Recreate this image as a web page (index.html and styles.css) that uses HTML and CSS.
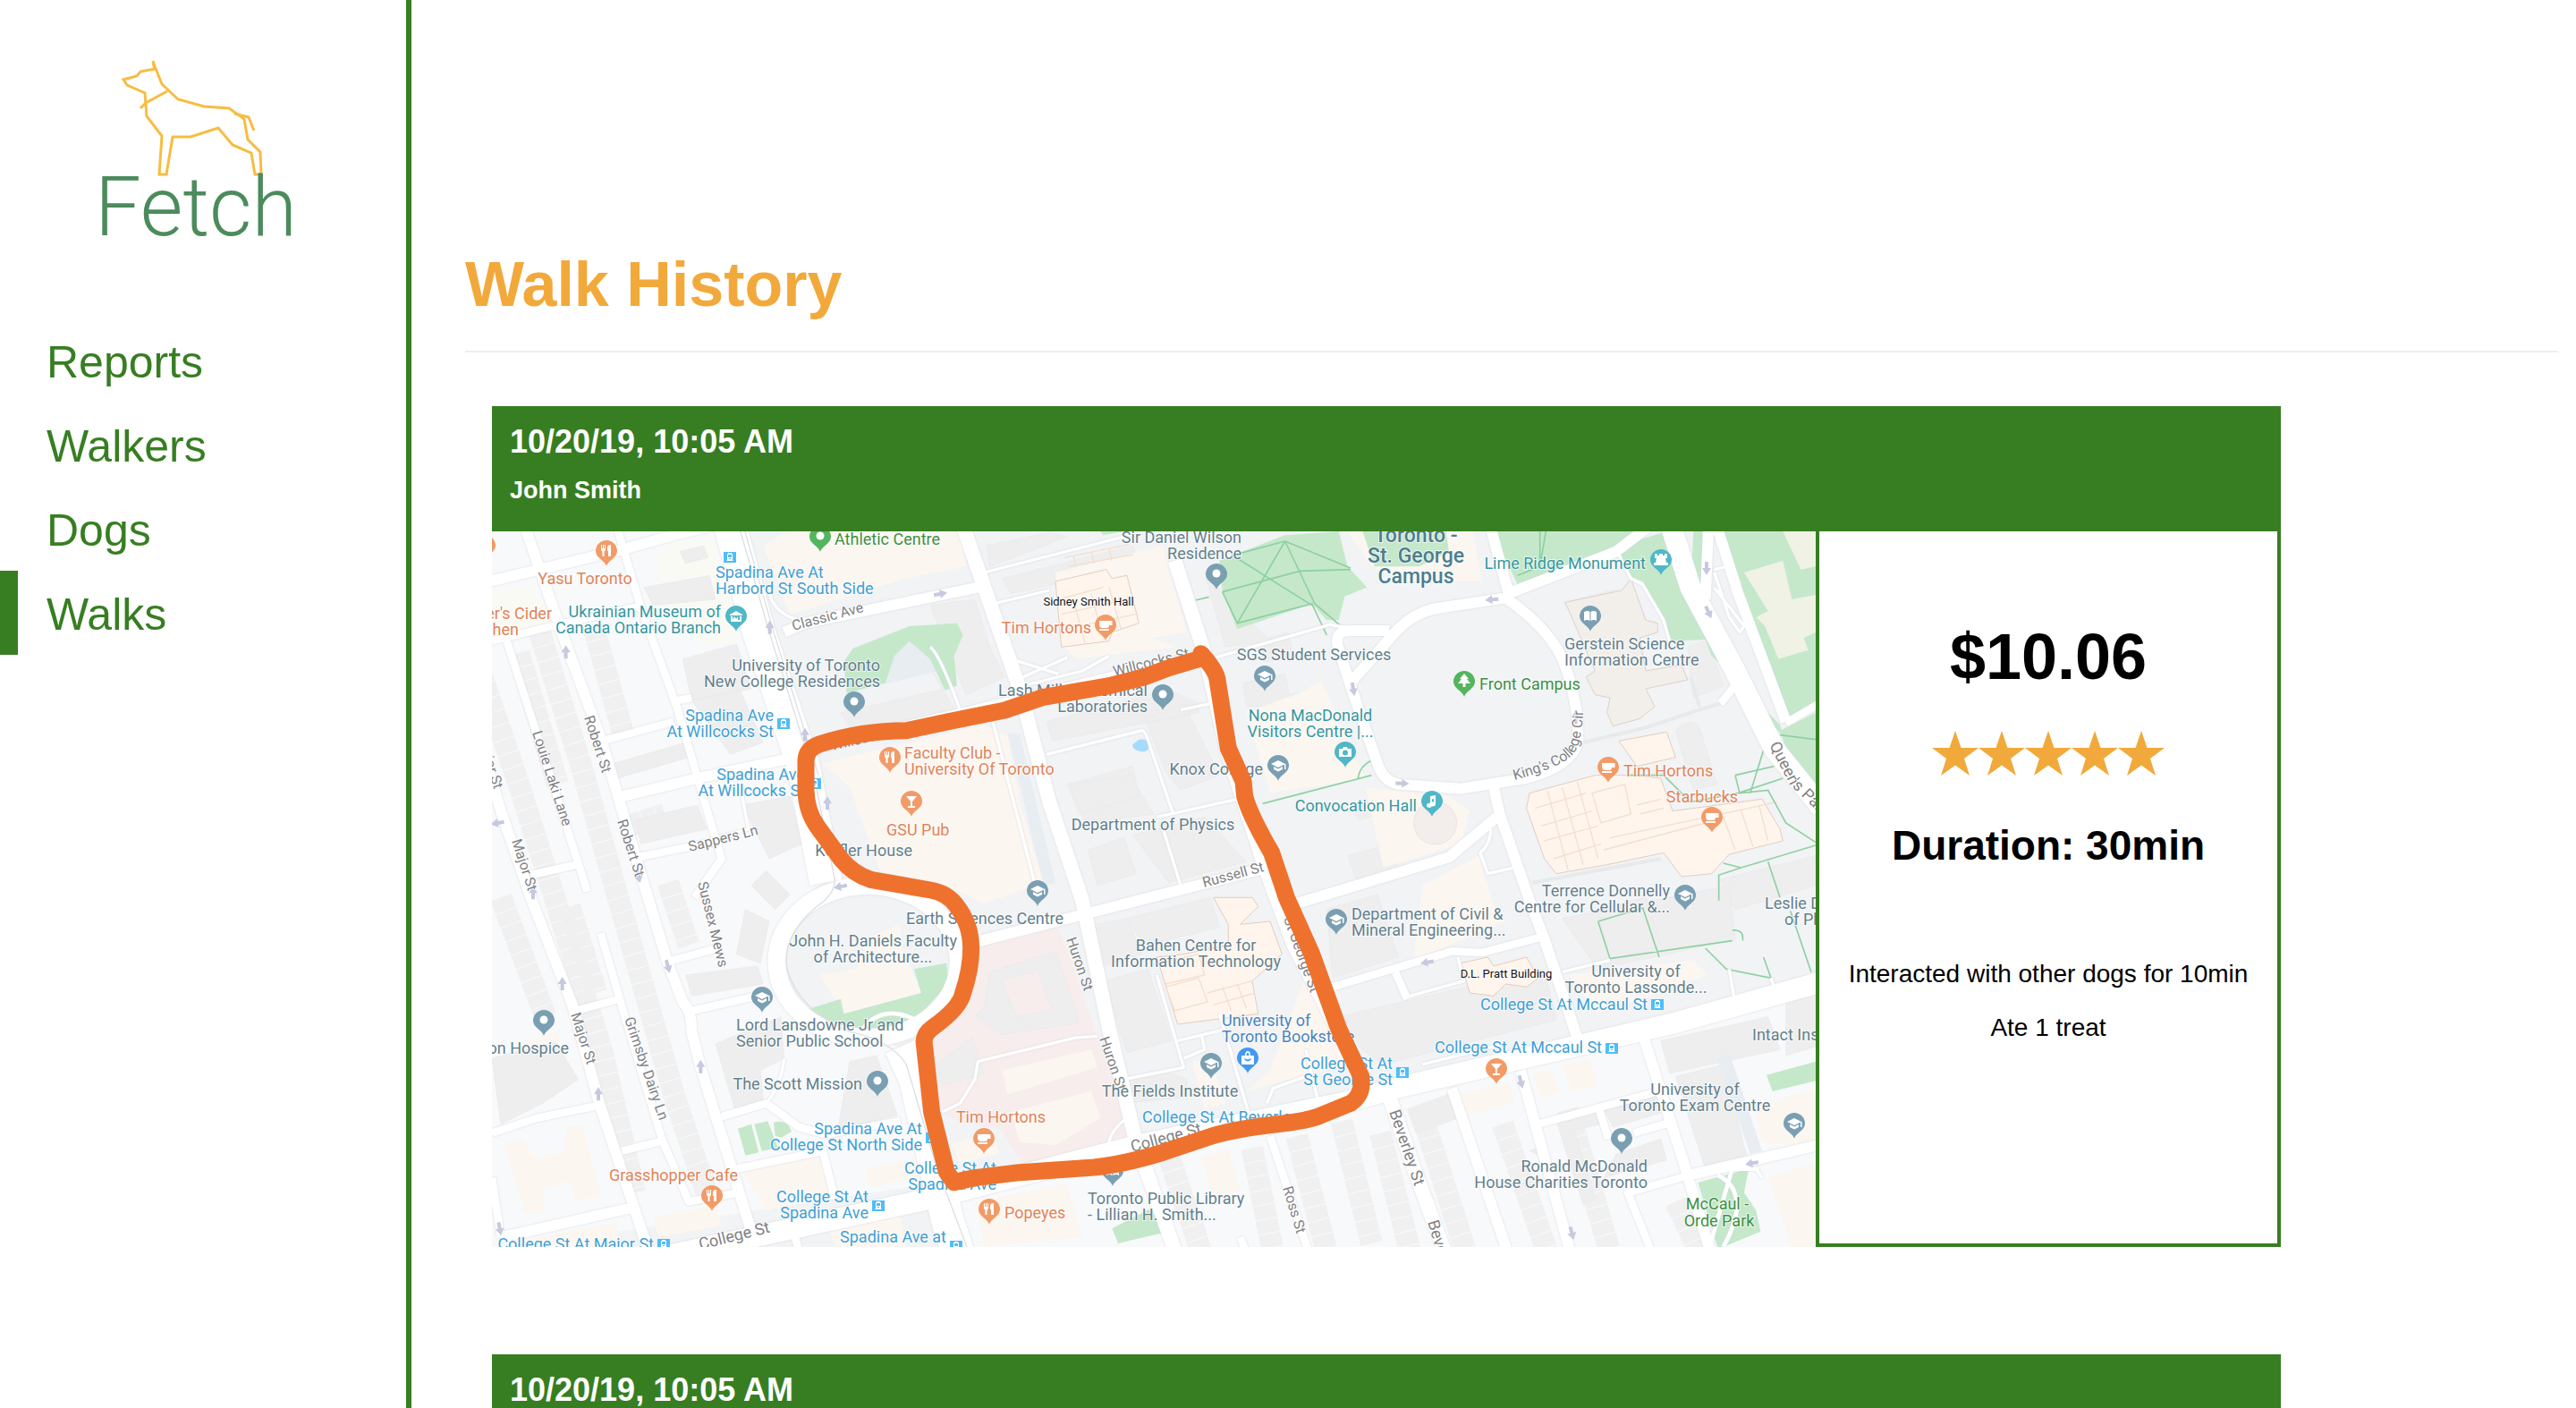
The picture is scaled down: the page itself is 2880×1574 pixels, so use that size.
FILE: index.html
```html
<!DOCTYPE html>
<html lang="en">
<head>
<meta charset="utf-8">
<title>Fetch - Walk History</title>
<link rel="stylesheet" href="styles.css">
</head>
<body>
<div class="layout">
  <aside class="sidebar">
    <svg class="logo" viewBox="0 0 454 356" role="img" aria-label="Fetch">
      <g class="logo-dog">
        <path d="M171 70l2 7-16 3-4 5-15 4 4 6 20 9 2 26 17 22-3 43h8l7-42h20l31-10 16 19 21 9 4 24h7l-1-25-14-14-4-23-17-12-28-2-29-8-18-17-8-20-2-6"/>
        <path d="M187 102l-24 13-6 6M262 127l16 4 6 15"/>
      </g>
      <text class="logo-name" x="106" y="263">Fetch</text>
    </svg>
    <nav class="nav">
      <a class="nav-link" href="#reports">Reports</a>
      <a class="nav-link" href="#walkers">Walkers</a>
      <a class="nav-link" href="#dogs">Dogs</a>
      <a class="nav-link nav-link-active" href="#walks" aria-current="page">Walks</a>
    </nav>
  </aside>
  <main class="main">
    <h1 class="page-title">Walk History</h1>
    <hr class="rule">
    <div class="walks">
      <article class="walk">
        <header class="walk-header">
          <h2 class="walk-date">10/20/19, 10:05 AM</h2>
          <p class="walk-walker">John Smith</p>
        </header>
        <div class="walk-body">
          <svg class="map" viewBox="0 0 1480 800" role="img" aria-label="Map of the walk">
            <defs>
              <path id="pin" d="M0 0C-1-6-12-9-12-17A12 12 0 0 1 12-17C12-9 1-6 0 0Z"/>
              <g id="dot"><circle cy="-18" r="4.500"/></g>
              <g id="cap"><path d="M-8-19L0-23 8-19 0-15ZM-5-16L0-13.500 5-16V-13L0-10.500-5-13ZM7-19H8.500V-13H7Z"/></g>
              <g id="fork"><path d="M-6-24h1v4h1v-4h1v4h1v-4h1v5q0 2-1.500 2.500V-11h-2v-5.500Q-6-17-6-19ZM2-11v-6H1v-4q0-3 4-3v13Z"/></g>
              <g id="cup"><path d="M-7-22H7.500v5H4q0 3-3 3h-4q-4 0-4-4ZM-7-13H4v2H-7Z"/></g>
              <g id="drink"><path d="M-6-23H6L1-17v5h3v2h-8v-2h3v-5Z"/></g>
              <g id="book"><path d="M-7-22q4-2 6.500 0v10q-3-2-6.500 0ZM7-22q-4-2-6.500 0v10q3-2 6.500 0Z"/></g>
              <g id="tree"><path d="M0-26l5 6H3l4 5H1.500v4h-3v-4H-7l4-5h-2Z"/></g>
              <g id="tower"><path d="M-7-24h3v2h2v-2h4v2h2v-2h3v5h-2l1 5h2v3H-8v-3h2l1-5h-2Z"/></g>
              <g id="note"><path d="M-2-23l6-1v10a3 2.500 0 1 1-2-2.500V-20l-2 .5v7a3 2.500 0 1 1-2-2.500Z"/></g>
              <g id="camera"><path fill-rule="evenodd" d="M-7-21h4l1-2h4l1 2h4v9H-7ZM3-16.500a3 3 0 1 0-6 0 3 3 0 1 0 6 0Z"/></g>
              <g id="museum"><path d="M-7-19l7-4 7 4v1h-14ZM-6-17h2v4l2-4 2 3 2-3v4h2v-4h2v6H-6Z"/></g>
              <g id="bag"><path fill-rule="evenodd" d="M-7-20h4q0-5 3-5t3 5h4v10H-7ZM-1.500-20h3q0-3-1.500-3t-1.500 3ZM-4-16q4 5 8 0l-1-1q-3 3-6 0Z"/></g>
              <g id="tram"><rect class="tram-box" x="-7" y="-6" width="14" height="12"/><path fill="#fff" fill-rule="evenodd" d="M-2-5h4v1h1v7l1 1h-8l1-1v-7h1ZM-2-3v3h4v-3ZM-1 1v1h2v-1Z"/></g>
              <path id="arrow" d="M-2 7V0H-5L0-8 5 0H2V7Z"/>
            </defs>
            <rect class="campus" width="1480" height="800"/>
            <g transform="translate(-10 -4) scale(.33333)">
              <path class="residential" d="M0 0H830L930 350 1150 1180Q980 1300 980 1450T1390 1740L1500 2200 0 2430ZM1600 2220L2200 2080 3040 1910 4480 1550V2430H1600Z"/>
              <path class="pink" d="M1640 1410L1930 1340 2190 2060 1810 2135 1740 2020 1600 1990 1530 1960 1500 1730 1630 1600Z"/>
              <path class="cream" d="M600 60L770 30 860 380 740 400 570 240ZM30 220L160 190 240 320 30 370Z"/>

              <!-- rows of houses along the side streets -->
              <path class="houses" d="M190 350L330 800 450 1230 640 1900 760 2260M370 330L470 690M-10 480L120 860 240 1240 400 1760 510 2230M120 420L250 860M490 1000L610 960M290 1270L380 1560M60 1240L210 1640M620 1190L690 1400M3160 2000L3300 2440M3010 2030L3110 2430M3420 2000L3570 2430M3640 1950L3780 2430M2300 2110L2410 2430M2580 2080L2650 2430M2730 2040L2830 2430M2880 1990L2980 2400M4000 2260L4080 2430"/>

              <path class="grey" d="M540 200L760 160 780 240 570 260ZM670 440L850 390 900 540 700 580ZM700 580L860 540 940 720 830 760ZM440 790L680 720 690 770 450 840ZM660 80L740 60 755 100 680 120ZM510 980L720 930 750 1010 530 1060ZM870 930L1030 900 1070 1060 960 1110ZM950 1150L1030 1230 980 1280 900 1200ZM880 1280L960 1320 930 1460 850 1430ZM680 1500L920 1470 940 1530 700 1570ZM780 1730L1000 1640 1010 1780 930 1820 940 1920 850 1970ZM1230 1790L1320 1770 1390 1970 1190 2020ZM30 1780L240 1720 320 1850 200 1930 60 2000Z"/>
              <path class="grey" d="M1690 60L1900 15 1960 30 1700 130ZM1740 170L2180 60 2200 130 1770 220ZM1500 260L1650 240 1700 400 1750 500 1620 560ZM1200 620L1550 540 1500 470 1600 640 1250 700ZM1890 650L2240 560 2280 530 2400 590 2400 620 1910 715ZM2220 640L2350 590 2470 830 2340 880 2290 820ZM1970 860L2170 830 2250 960 2020 990ZM1960 860L2180 800 2200 900 2000 960ZM2030 1080L2150 1040 2190 1160 2060 1200ZM2180 1030L2420 970 2560 1120 2300 1190ZM2420 150L2490 400 2640 380 2560 300ZM2600 380L2700 350 2720 430 2620 450ZM2550 520L2690 490 2710 590 2560 600Z"/>
              <path class="grey" d="M2160 1310L2440 1240 2470 1340 2220 1400ZM2080 1520L2230 1480 2310 1720 2160 1760ZM2010 1340L2160 1310 2210 1430 2040 1480ZM2130 1870L2280 1820 2360 1850 2360 1910 2150 1930ZM2830 1280L3000 1230 3070 1440 2850 1510ZM2870 1640L3560 1480 3600 1650 3020 1800 2950 1750ZM3620 1310L4180 1200 4200 1380 3740 1480ZM3740 1280L3900 1240 3950 1400 3780 1450ZM3950 1720L4310 1640 4350 1750 3980 1830ZM4000 1840L4160 1800 4240 2110 4100 2150ZM4370 1590L4470 1560 4470 1740 4370 1770ZM4150 1180L4470 1100 4470 1200 4200 1280ZM3600 1990L3740 1950 3750 2000 3660 2020 3730 2250 3690 2270ZM3750 1930L3950 1890 3960 1960 3790 2010ZM3800 2100L3950 2050 3970 2120 3760 2180ZM3100 1950L3240 1900 3270 1980 3130 2030ZM3510 2090L3560 2070 3580 2120ZM4000 680Q4050 630 4080 670L4140 860 4060 880ZM4040 400L4110 375 4160 530 4060 570ZM2900 1100L3050 1060 3070 1140 2930 1180ZM2910 940L3020 890 3040 950 2940 980Z"/>
              <path class="grey" fill-rule="evenodd" d="M1700 1490L1920 1420 2000 1660 1740 1700 1650 1640 1680 1610ZM1740 1520L1790 1640 1910 1615 1860 1485ZM1520 1800L1640 1710 1680 1830 1540 1870Z"/>
              <path class="shade" d="M4250 260L4350 190 4400 300 4350 420ZM1760 690L1800 690 1920 1190 1880 1200ZM2700 560L2740 550 2770 700 2740 700ZM3620 250L3820 200 3740 240 3640 270ZM2720 1380L2760 1370 2830 1600 2790 1600ZM4140 1780L4180 1760 4290 2090 4250 2100ZM1270 410L1560 340 1530 480 1240 550Z"/>
              <path class="peach" d="M1020 12H1610L1620 130 1420 170 1030 290 940 60ZM1140 790L1300 750 1560 690 1680 660 1760 700 1800 920 1880 1190 1680 1260 1560 1200 1330 1150 1230 870ZM1920 150L2280 60 2360 350 2240 370 2330 400 1990 440 1940 390ZM2560 620L2750 550 2810 510 2960 840 2640 890ZM1300 1370L1400 1330 1400 1400 1470 1560 1210 1630 1130 1500 1250 1480ZM2640 1820L2760 1500 2700 1300 2800 1480 2900 1800 2560 1890ZM2380 1790L2440 1780 2490 1930 2420 1950ZM2900 12L2980 130 3110 180 3350 180 3320 12ZM3150 1200L3340 1100 3400 1300 3430 1320 3120 1450ZM2960 870L3240 900 3310 950 3280 1060 3020 1140ZM3640 1500L4060 1450 4110 1500 3740 1630ZM4260 1940L4470 1880 4470 2080 4290 2060ZM4310 2180L4470 2130V2412H4390ZM3280 1900L3440 1860 3460 1930 3300 1970ZM3520 1830L3580 1815 3610 1890 3550 1910ZM3620 1800L3710 1780 3740 1870 3650 1890ZM2410 2110L2500 2080 2540 2220 2450 2250Z"/>
              <path class="peach" d="M70 2065L130 2050 180 2120 270 2090 280 2010 330 2000 400 2240 310 2260 290 2190 200 2220 210 2290 140 2300ZM870 2160L1130 2110 1160 2240 950 2290ZM1280 2150L1470 2110 1500 2170 1300 2210ZM570 2310L780 2270 800 2340 590 2380ZM80 2400L450 2330 460 2412H90ZM1740 1820L2040 1750 2060 1810 1760 1900ZM1770 1960L2040 1890 2070 1980 1920 2070 1800 2060ZM1570 2070L1710 2020 1730 2100 1600 2130ZM1650 2260L1960 2200 2010 2380 1680 2412ZM1160 2350L1400 2310 1420 2412H1180ZM130 1730L250 1690 260 1720 140 1750Z"/>
              <path class="indoor" d="M1920 180L2090 140 2110 170 2160 160 2200 320 2110 350 2100 380 1940 400ZM2450 1240L2580 1240 2600 1270 2540 1330 2640 1320 2680 1430 2580 1520 2600 1630 2330 1665 2260 1440 2350 1430 2500 1400 2500 1330ZM3510 890L3730 830 3860 830 3950 840 3990 950 4290 910 4350 1010 4360 1050 4180 1095 4120 1160 4020 1170 3960 1090 3770 1130 3600 1160 3560 1110 3500 940ZM3810 715L3970 685 4000 770 3870 800ZM3280 1460L3370 1440 3390 1470 3500 1440 3540 1510 3500 1540 3430 1530 3390 1570 3310 1560Z"/>
              <path class="stone" d="M3630 250L3820 210 3850 170 3900 310 3940 320 3940 350 3880 370 3900 480 4020 460 4040 510 3900 540 3930 600 3880 640 3790 665 3770 620 3780 570 3730 560 3700 500 3730 480Z"/>
              <path class="rooms" d="M3530 940L3700 890M3550 1000L3720 950M3560 1050L3740 1000M3590 1110L3750 1060M3570 880L3640 1150M3620 870L3690 1130M3670 850L3740 1110M3720 890L3830 860 3850 960 3750 990ZM3760 1080L4100 990M3780 1040L4340 920M3870 930L3950 910M3880 960L3960 940M4160 970L4200 1080M4220 950L4260 1070M4280 930L4310 1050M2290 1540L2400 1510 2430 1590 2320 1620ZM2270 1460L2400 1430 2420 1500 2290 1530M2430 1560L2580 1520M2450 1600L2590 1560M2480 1540L2510 1620M2530 1530L2560 1610M1930 240L2080 200M1940 290L2160 240M1950 340L2190 290M1980 240L2020 390M2040 220L2080 370M2100 200L2140 340M1950 100L2170 55M1960 130L2180 90M1980 95L1990 130M2040 80L2050 120M2100 70L2110 110"/>

              <path class="green" d="M1240 405L1430 330 1590 320 1610 360 1580 430 1590 530 1550 545 1500 440 1430 380 1380 430 1350 520 1220 555 1210 450ZM2470 110L2690 25 2870 12 2900 130 2965 200 2890 230 2870 310 2830 310 2780 255 2530 340 2480 215ZM2950 12L3230 12 3240 80 3140 130 2990 130ZM3385 12H3860L3800 70 3470 190ZM3880 40L3970 12 4050 230 4210 510 4120 430 4100 375 3980 380 3960 300 3890 180 3840 160 3810 80ZM4060 12H4100L4100 240 4050 200ZM4130 12H4470V580L4370 640 4200 240ZM4350 680L4470 620V900L4400 820ZM4190 500L4350 660 4360 700ZM2070 12L2150 12 2080 25Z"/>
              <path class="green" d="M1445 1480L1555 1460 1560 1530 1450 1650 1440 1680 1280 1700 1180 1690 1090 1615 1200 1580 1210 1630 1470 1560ZM855 2015L900 2000 925 2095 880 2105ZM910 2000L955 1990 990 2080 935 2090ZM975 1995Q1020 1980 1035 2025L1000 2045 980 2040ZM2110 2350L2255 2275 2280 2365 2130 2400ZM4305 1835L4470 1790V1855L4325 1890ZM4075 2195L4245 2150 4230 2230 4270 2290 4285 2360 4160 2412H4140Z"/>
              <path class="beige" d="M4230 150L4360 110 4390 240 4470 225V350L4430 370 4445 410 4345 440 4300 330 4270 300 4310 280ZM4360 12H4470V130L4420 140Z"/>
              <path class="green-path" d="M2690 45L2530 320M2690 45L2790 255 2890 340M2510 90L2780 260M2480 215L2740 145 2910 140M2540 85L2690 45M2690 45L2910 135M2480 215L2530 320 2780 255 2830 360M2390 243L2435 232M1950 530L2100 492M2615 925L2980 830M2935 840Q2940 800 2980 780M3545 12V130L3470 160M3545 130L3565 12M3840 830L3960 830 4050 920 4210 890 4360 840M4300 730L4250 890M4200 830L4330 800M4200 830L4215 890 4310 880 4370 990 4470 1055M4160 1125L4220 1140 4470 1065M4220 1140L4145 1165V1250M4310 1120L4350 1240M3740 1320L3780 1445 4190 1385M3740 1320L3890 1275 3945 1440M4190 1350Q4230 1345 4225 1385M4100 1410L4170 1480 4320 1510 4295 1440M4385 1285L4455 1490M4350 695L4470 710"/>
              <path class="water" d="M2178 728L2200 710Q2235 705 2233 730 2235 755 2205 750 2180 745 2178 728Z"/>
              <circle class="hall" cx="3194" cy="990" r="72"/>

              <g class="roads">
                <path class="w110" d="M825-20L925 350 1075 800 1150 1190M1400 1740L1450 1850 1560 2330 1600 2450"/>
                <ellipse class="w60" cx="1290" cy="1455" rx="305" ry="255"/>
                <path class="w70" d="M600 2445L1500 2250 2200 2070 2900 1925 3100 1870 4000 1660 4500 1520M3980-20L4050 200 4200 480 4330 740 4490 940"/>
                <path class="w50" d="M2320 110L2420 420 2500 760 2620 1130 2720 1400 2970 1880M3030 1880L3130 2170 3230 2440M1605-20L1800 540 1900 920 2010 1250 2100 1680 2190 2060 2330 2450"/>
                <path class="w36" d="M0 185L460 75 620 30 820-20M135-20L260 340 400 720 520 1130 620 1460 670 1590Q700 1620 700 1690L730 1810 900 2360M450 905L720 840 1020 775M-10 720L60 950 160 1240 300 1600 390 1930 560 2440M60 2380L500 2280M1010 350L1080 320 1660 200M1110 740L1700 600 2400 430M1650 1390L2040 1290 2630 1140M2730 1260L3240 1105 3400 970M2910 520L3060 350Q3120 285 3200 270L3430 235Q3580 340 3625 450 3680 600 3672 720 3650 800 3500 840L3280 875 3070 860Q3020 850 3000 790L2910 530 2865 390Q2860 345 2910 345H3040M3380 0L3440 220 3800 80 3930-20M3390 870L3410 960 3510 1250 3560 1380 3670 1710M4110 0L4100 240M4140 0L4210 220 4370 650M3480 1820L3650 2440M3250 1880L3440 2440M3890 1700L4040 2170 4120 2440M4050 2170L4480 2070"/>
                <path class="w26" d="M80 380L350 1220M450 0L530 270 650 600 720 840 800 1110 710 1240M30 380L250 325 540 260M400 715L640 650M650 580L700 570M520 1105L790 1050M160 1165L310 1130M395 1360L470 1620 600 2050 690 2260 860 2230M310 1620L460 1580M30 2030L180 1980 400 1935M465 2090L610 2055M30 2180L60 2380M620 1455L785 1410M700 1620L920 1570M800 1975L950 1930 1060 2010 1150 2035 1400 1990M850 2150L1140 2090 1180 2250M1040 2350L1060 2430M3560 1370L3350 1425 3250 1420 2850 1540M3540 2000L3960 1885M3740 1940L3775 2050M3860 2030L3980 1995M4050 2170L3840 2230 3920 2430M4370 655L4490 585M4215 510L4150 590M2640 2040L2770 2430M2540 2380L2560 2430M3060 1490L3100 1580"/>
                <path class="w12" d="M860 850L890 1010 790 1040M960 220Q980 290 1060 310M1010 1780Q1000 1870 950 1930M1500 400Q1530 420 1600 610M1680 150L2150 30M1710 255L1900 210M1770 440L1930 490M1790 510L1960 435M1830 525L2010 480 2100 430M1890 760L2210 680Q2220 680 2230 710L2315 960M2260 970L2530 910M2275 990L2340 1200M2340 610L2440 590M2440 440L2840 325 2960 345M1710 650L1850 1190M1540 1960L1600 1930 1650 1850 1660 1790 1990 1710 2060 1705M2100 2090Q2090 2030 2160 1980M2330 1720L2480 1685M2260 1500L2350 1810 2150 1850M2410 1700L2420 1750 2350 1780M2470 1630L2570 1970M2800 1920L2760 1750M2630 1930L2650 1880 2760 1840M3380 1010Q3380 1060 3345 1090L3370 1160 3460 1140M3810 90L3850 170 3890 190 3960 310 3980 380M4130 140L4170 130M4130 150L4180 300 4215 350 4230 330 4130 200M3110 1570L3290 1520 3270 1440M3620 1490L3780 1450M3150 1800L3430 1730M4180 1480L4195 1570M4320 1510L4330 1540M4270 2150L4290 2180"/>
                <path class="w14" d="M4160 2412Q4260 2230 4140 2170M4280 2150L4190 2150 4120 2390M1260 1700Q1330 1590 1450 1650"/>
              </g>
              <path class="tramline" d="M860 0L960 350 1110 830 1180 1180Q1180 1230 1120 1270 1000 1370 1020 1480 1060 1620 1230 1690 1370 1720 1420 1800L1520 2140 1630 2430M875 0L975 350 1125 830"/>
              <path class="lane" d="M3690 720L3900 670 4080 610 4150 590M4080 600L4050 500M3520 1190L3950 1110"/>
              <g class="arrows">
                <use href="#arrow" transform="translate(278 418) scale(3)"/><use href="#arrow" transform="translate(962 335) scale(3)"/><use href="#arrow" transform="translate(1080 695) scale(3)"/><use href="#arrow" transform="translate(1155 925) scale(3)"/><use href="#arrow" transform="translate(168 1225) scale(3)"/><use href="#arrow" transform="translate(266 1530) scale(3)"/><use href="#arrow" transform="translate(387 1900) scale(3)"/><use href="#arrow" transform="translate(730 1808) scale(3)"/><use href="#arrow" transform="translate(3665 636) scale(3)"/><use href="#arrow" transform="translate(521 1168) rotate(165) scale(3)"/><use href="#arrow" transform="translate(620 1470) rotate(165) scale(3)"/><use href="#arrow" transform="translate(56 2350) rotate(170) scale(3)"/><use href="#arrow" transform="translate(50 990) rotate(-100) scale(3)"/><use href="#arrow" transform="translate(1533 222) rotate(80) scale(3)"/><use href="#arrow" transform="translate(1200 1203) rotate(-100) scale(3)"/><use href="#arrow" transform="translate(2919 540) rotate(170) scale(3)"/><use href="#arrow" transform="translate(3385 241) rotate(-95) scale(3)"/><use href="#arrow" transform="translate(4104 135) rotate(180) scale(3)"/><use href="#arrow" transform="translate(4110 282) rotate(155) scale(3)"/><use href="#arrow" transform="translate(3082 857) rotate(92) scale(3)"/><use href="#arrow" transform="translate(3168 1457) rotate(-100) scale(3)"/><use href="#arrow" transform="translate(3481 1857) rotate(165) scale(3)"/><use href="#arrow" transform="translate(3652 2365) rotate(165) scale(3)"/><use href="#arrow" transform="translate(4257 2131) rotate(-100) scale(3)"/>
              </g>
            </g>

            <g class="labels" transform="translate(-10 -4)">
              <g class="street">
                <text transform="translate(47 -14) rotate(70)">St</text>
                <text transform="translate(113 212) rotate(72)">Robert St</text>
                <text transform="translate(150 328) rotate(72)">Robert St</text>
                <text transform="translate(55 229) rotate(72)">Louie Laki Lane</text>
                <text transform="translate(-6 236) rotate(72)">Major St</text>
                <text transform="translate(32 350) rotate(72)">Major St</text>
                <text transform="translate(98 544) rotate(72)">Major St</text>
                <text transform="translate(158 549) rotate(71)">Grimsby Dairy Ln</text>
                <text transform="translate(240 397) rotate(76)">Sussex Mews</text>
                <text transform="translate(347 115) rotate(-15)">Classic Ave</text>
                <text transform="translate(231 362) rotate(-14)">Sappers Ln</text>
                <text transform="translate(390 249) rotate(-13)">Willcocks St</text>
                <text transform="translate(706 166) rotate(-14)">Willcocks St</text>
                <text transform="translate(806 402) rotate(-15)">Russell St</text>
                <text transform="translate(652 460) rotate(71)">Huron St</text>
                <text transform="translate(689 571) rotate(71)">Huron St</text>
                <text transform="translate(895 437) rotate(70)">St George St</text>
                <text transform="translate(894 738) rotate(73)">Ross St</text>
                <text class="street-big" transform="translate(243 807) rotate(-14)">College St</text>
                <text class="street-big" transform="translate(726 698) rotate(-15)">College St</text>
                <text class="street-big" transform="translate(1013 653) rotate(71)">Beverley St</text>
                <text class="street-big" transform="translate(1056 776) rotate(73)">Beverley St</text>
                <path id="circle-road" fill="none" stroke="none" d="M1153 282Q1205 268 1218 254 1230 242 1230 195"/>
                <text><textPath href="#circle-road">King's College Cir</textPath></text>
                <path id="queens-park" fill="none" stroke="none" d="M1438 243L1461 287 1505 330"/>
                <text class="street-big"><textPath href="#queens-park">Queen's Park</textPath></text>
              </g>
              <g class="food">
                <text x="114" y="63" text-anchor="middle">Yasu Toronto</text>
                <text x="77" y="102" text-anchor="end">Mother's Cider</text><text x="40" y="120" text-anchor="end">Kitchen</text>
                <text x="680" y="118" text-anchor="end">Tim Hortons</text>
                <text x="471" y="258">Faculty Club -</text><text x="471" y="276">University Of Toronto</text>
                <text x="451" y="344">GSU Pub</text>
                <text x="1275" y="278">Tim Hortons</text>
                <text x="1363" y="307" text-anchor="middle">Starbucks</text>
                <text x="213" y="730" text-anchor="middle">Grasshopper Cafe</text>
                <text x="579" y="665" text-anchor="middle">Tim Hortons</text>
                <text x="583" y="772">Popeyes</text>
              </g>
              <g class="culture">
                <text x="266" y="100" text-anchor="end">Ukrainian Museum of</text><text x="266" y="118" text-anchor="end">Canada Ontario Branch</text>
                <text x="925" y="216" text-anchor="middle">Nona MacDonald</text><text x="925" y="234" text-anchor="middle">Visitors Centre |...</text>
                <text x="1044" y="317" text-anchor="end">Convocation Hall</text>
                <text x="1300" y="46" text-anchor="end">Lime Ridge Monument</text>
              </g>
              <g class="transit">
                <text x="260" y="56">Spadina Ave At</text><text x="260" y="74">Harbord St South Side</text>
                <text x="325" y="216" text-anchor="end">Spadina Ave</text><text x="325" y="234" text-anchor="end">At Willcocks St</text>
                <text x="360" y="282" text-anchor="end">Spadina Ave</text><text x="360" y="300" text-anchor="end">At Willcocks St</text>
                <text x="491" y="678" text-anchor="end">Spadina Ave At</text><text x="491" y="696" text-anchor="end">College St North Side</text>
                <text x="574" y="722" text-anchor="end">College St At</text><text x="574" y="740" text-anchor="end">Spadina Ave</text>
                <text x="431" y="754" text-anchor="end">College St At</text><text x="431" y="772" text-anchor="end">Spadina Ave</text>
                <text x="518" y="799" text-anchor="end">Spadina Ave at</text>
                <text x="191" y="807" text-anchor="end">College St At Major St</text>
                <text x="737" y="665">College St At Beverley St</text>
                <text x="1017" y="605" text-anchor="end">College St At</text><text x="1017" y="623" text-anchor="end">St George St</text>
                <text x="1302" y="539" text-anchor="end">College St At Mccaul St</text>
                <text x="1251" y="587" text-anchor="end">College St At Mccaul St</text>
              </g>
              <g class="park">
                <text x="393" y="19">Athletic Centre</text>
                <text x="1114" y="181">Front Campus</text>
                <text x="1380" y="762" text-anchor="middle">McCaul -</text><text x="1382" y="781" text-anchor="middle">Orde Park</text>
              </g>
              <g class="shop"><text x="826" y="557">University of</text><text x="826" y="575">Toronto Bookstore</text></g>
              <g class="big"><text x="1043" y="16" text-anchor="middle">Toronto -</text><text x="1043" y="39" text-anchor="middle">St. George</text><text x="1043" y="62" text-anchor="middle">Campus</text></g>
              <g class="place">
                <text x="444" y="160" text-anchor="end">University of Toronto</text><text x="444" y="178" text-anchor="end">New College Residences</text>
                <text x="480" y="367" text-anchor="end">Koffler House</text>
                <text x="848" y="17" text-anchor="end">Sir Daniel Wilson</text><text x="848" y="35" text-anchor="end">Residence</text>
                <text x="743" y="188" text-anchor="end">Lash Miller Chemical</text><text x="743" y="206" text-anchor="end">Laboratories</text>
                <text x="929" y="148" text-anchor="middle">SGS Student Services</text>
                <text x="872" y="276" text-anchor="end">Knox College</text>
                <text x="749" y="338" text-anchor="middle">Department of Physics</text>
                <text x="1209" y="136">Gerstein Science</text><text x="1209" y="154">Information Centre</text>
                <text x="1327" y="412" text-anchor="end">Terrence Donnelly</text><text x="1327" y="430" text-anchor="end">Centre for Cellular &amp;...</text>
                <text x="1433" y="426">Leslie Dan Faculty</text><text x="1455" y="444">of Pharmacy</text>
                <text x="649" y="443" text-anchor="end">Earth Sciences Centre</text>
                <text x="530" y="468" text-anchor="end">John H. Daniels Faculty</text><text x="436" y="486" text-anchor="middle">of Architecture...</text>
                <text x="797" y="473" text-anchor="middle">Bahen Centre for</text><text x="797" y="491" text-anchor="middle">Information Technology</text>
                <text x="971" y="438">Department of Civil &amp;</text><text x="971" y="456">Mineral Engineering...</text>
                <text x="1289" y="502" text-anchor="middle">University of</text><text x="1289" y="520" text-anchor="middle">Toronto Lassonde...</text>
                <text x="1419" y="573">Intact Insurance</text>
                <text x="1355" y="634" text-anchor="middle">University of</text><text x="1355" y="652" text-anchor="middle">Toronto Exam Centre</text>
                <text x="1302" y="720" text-anchor="end">Ronald McDonald</text><text x="1302" y="738" text-anchor="end">House Charities Toronto</text>
                <text x="96" y="588" text-anchor="end">Kensington Hospice</text>
                <text x="283" y="562">Lord Lansdowne Jr and</text><text x="283" y="580">Senior Public School</text>
                <text x="424" y="628" text-anchor="end">The Scott Mission</text>
                <text x="768" y="636" text-anchor="middle">The Fields Institute</text>
                <text x="676" y="756">Toronto Public Library</text><text x="676" y="774">- Lillian H. Smith...</text>
              </g>
              <g class="building"><text x="677" y="87" text-anchor="middle">Sidney Smith Hall</text><text x="1144" y="503" text-anchor="middle">D.L. Pratt Building</text></g>
            </g>

            <g class="pins" transform="translate(-10 -4)">
              <g transform="translate(2 37)"><use class="pin-food" href="#pin"/><use href="#fork"/></g>
              <g transform="translate(138 43)"><use class="pin-food" href="#pin"/><use href="#fork"/></g>
              <g transform="translate(377 27)"><use class="pin-park" href="#pin"/><use href="#dot"/></g>
              <g transform="translate(283 116)"><use class="pin-culture" href="#pin"/><use href="#museum"/></g>
              <g transform="translate(415 212)"><use class="pin-place" href="#pin"/><use href="#dot"/></g>
              <g transform="translate(455 274)"><use class="pin-food" href="#pin"/><use href="#fork"/></g>
              <g transform="translate(479 323)"><use class="pin-food" href="#pin"/><use href="#drink"/></g>
              <g transform="translate(820 69)"><use class="pin-place" href="#pin"/><use href="#dot"/></g>
              <g transform="translate(696 126)"><use class="pin-food" href="#pin"/><use href="#cup"/></g>
              <g transform="translate(760 204)"><use class="pin-place" href="#pin"/><use href="#dot"/></g>
              <g transform="translate(874 183)"><use class="pin-place" href="#pin"/><use href="#cap"/></g>
              <g transform="translate(964 268)"><use class="pin-culture" href="#pin"/><use href="#camera"/></g>
              <g transform="translate(889 283)"><use class="pin-place" href="#pin"/><use href="#cap"/></g>
              <g transform="translate(620 423)"><use class="pin-place" href="#pin"/><use href="#cap"/></g>
              <g transform="translate(1317 53)"><use class="pin-culture" href="#pin"/><use href="#tower"/></g>
              <g transform="translate(1238 116)"><use class="pin-place" href="#pin"/><use href="#book"/></g>
              <g transform="translate(1097 189)"><use class="pin-park" href="#pin"/><use href="#tree"/></g>
              <g transform="translate(1061 323)"><use class="pin-culture" href="#pin"/><use href="#note"/></g>
              <g transform="translate(1258 285)"><use class="pin-food" href="#pin"/><use href="#cup"/></g>
              <g transform="translate(1374 341)"><use class="pin-food" href="#pin"/><use href="#cup"/></g>
              <g transform="translate(1344 428)"><use class="pin-place" href="#pin"/><use href="#cap"/></g>
              <g transform="translate(68 568)"><use class="pin-place" href="#pin"/><use href="#dot"/></g>
              <g transform="translate(312 542)"><use class="pin-place" href="#pin"/><use href="#cap"/></g>
              <g transform="translate(441 636)"><use class="pin-place" href="#pin"/><use href="#dot"/></g>
              <g transform="translate(256 764)"><use class="pin-food" href="#pin"/><use href="#fork"/></g>
              <g transform="translate(954 455)"><use class="pin-place" href="#pin"/><use href="#cap"/></g>
              <g transform="translate(814 616)"><use class="pin-place" href="#pin"/><use href="#cap"/></g>
              <g transform="translate(855 610)"><use class="pin-shop" href="#pin"/><use href="#bag"/></g>
              <g transform="translate(560 700)"><use class="pin-food" href="#pin"/><use href="#cup"/></g>
              <g transform="translate(566 779)"><use class="pin-food" href="#pin"/><use href="#fork"/></g>
              <g transform="translate(704 736)"><use class="pin-place" href="#pin"/><use href="#book"/></g>
              <g transform="translate(1133 622)"><use class="pin-food" href="#pin"/><use href="#drink"/></g>
              <g transform="translate(1273 700)"><use class="pin-place" href="#pin"/><use href="#dot"/></g>
              <g transform="translate(1466 683)"><use class="pin-place" href="#pin"/><use href="#cap"/></g>
              <use href="#tram" x="276" y="33"/><use href="#tram" x="336" y="219"/><use href="#tram" x="371" y="286"/><use href="#tram" x="502" y="682"/><use href="#tram" x="442" y="758"/><use href="#tram" x="202" y="801"/><use href="#tram" x="529" y="803"/><use href="#tram" x="1313" y="533"/><use href="#tram" x="1262" y="582"/><use href="#tram" x="1028" y="609"/>
            </g>

            <path class="route" transform="translate(-10 -4) scale(.33333)" d="M2408 422Q2460 480 2463 510L2500 740 2550 850 2555 900Q2570 960 2645 1090L2695 1240 2780 1430 2870 1680 2945 1840Q2955 1900 2910 1930L2800 1975Q2750 1992 2650 2002 2500 2020 2430 2045L2280 2095Q2150 2135 2050 2145L1800 2162 1650 2180 1580 2195 1555 2160 1505 1960 1480 1730Q1475 1700 1510 1675 1600 1610 1610 1560 1637 1480 1637 1410 1637 1330 1590 1270 1560 1225 1500 1215L1300 1180Q1240 1160 1200 1110L1120 1000Q1085 950 1083 880V780Q1085 740 1130 725 1270 680 1420 680L1560 650 1750 612 1880 568 2100 530 2220 500 2300 470 2408 438"/>
          </svg>
          <div class="details">
            <p class="price">$10.06</p>
            <svg class="stars" viewBox="0 0 260 50" role="img" aria-label="5 out of 5 stars">
              <defs><path id="star" d="M26 0L32.500 19H52L36 31 42 50 26 38.500 10 50 16 31 0 19H19.500Z"/></defs>
              <use href="#star"/><use href="#star" x="52"/><use href="#star" x="104"/><use href="#star" x="156"/><use href="#star" x="208"/>
            </svg>
            <p class="duration">Duration: 30min</p>
            <ul class="notes"><li>Interacted with other dogs for 10min</li><li>Ate 1 treat</li></ul>
          </div>
        </div>
      </article>
      <article class="walk">
        <header class="walk-header">
          <h2 class="walk-date">10/20/19, 10:05 AM</h2>
          <p class="walk-walker">John Smith</p>
        </header>
      </article>
    </div>
  </main>
</div>
</body>
</html>
```
FILE: styles.css
```css
* { box-sizing: border-box; }
body, h1, h2, p, ul { margin: 0; padding: 0; }
body {
  background: #fff;
  color: #000;
  font-family: "Liberation Sans", Arial, sans-serif;
}
.layout { display: flex; height: 100vh; }

/* Sidebar */
.sidebar { flex: 0 0 460px; border-right: 6px solid #377e22; }
.logo { display: block; width: 100%; }
.logo-dog { fill: none; stroke: #f6bd41; stroke-width: 3; }
.logo-name { fill: #4b8b5c; font: 300 92px Roboto, sans-serif; }
.nav { display: flex; flex-direction: column; }
.nav-link {
  height: 94px;
  padding-left: 32px;
  border-left: 20px solid transparent;
  color: #377e22;
  font-size: 50px;
  line-height: 98px;
  text-decoration: none;
}
.nav-link-active { border-left-color: #377e22; }

/* Page */
.main {
  flex: 1;
  min-width: 0;
  padding: 278px 20px 0 60px;
  overflow-y: auto;
  scrollbar-width: none;
}
.page-title { color: #f2a93b; font-size: 70px; line-height: 80px; }
.rule { margin: 34px 0 60px; border: 0; border-top: 2px solid #eee; }
.walks {
  display: flex;
  flex-direction: column;
  gap: 120px;
  max-width: 2060px;
  padding: 0 30px;
}

/* Walk card */
.walk-header {
  display: flex;
  flex-direction: column;
  gap: 18px;
  padding: 20px 20px 30px;
  background: #377e22;
  color: #fff;
}
.walk-date { font-size: 36px; line-height: 40px; }
.walk-walker { font-size: 27px; font-weight: bold; line-height: 32px; }
.walk-body { display: grid; grid-template-columns: 37fr 13fr; }
.details {
  display: flex;
  flex-direction: column;
  align-items: center;
  padding-top: 100px;
  border: 4px solid #377e22;
  border-top: 0;
  text-align: center;
}
.price { font-size: 72px; font-weight: bold; line-height: 80px; }
.stars { width: 260px; margin: 43px 0 52px; fill: #f2a93b; }
.duration { font-size: 46px; font-weight: bold; line-height: 52px; }
.notes { margin-top: 88px; list-style: none; font-size: 28px; line-height: 60px; }

/* Map: land */
.map { display: block; width: 100%; }
.campus { fill: #f1f3f5; }
.residential { fill: #f8f9fb; }
.pink { fill: #f8eded; }
.cream { fill: #fafaf5; }
.grey { fill: #eee; stroke: #e8e9eb; stroke-width: 2; }
.shade { fill: #e8edf2; }
.peach { fill: #fcf6f1; }
.indoor { fill: #fff5ec; stroke: #e2cdbd; stroke-width: 3; }
.stone { fill: #f2efeb; stroke: #ddd0c8; stroke-width: 3; }
.rooms { fill: none; stroke: #f3dfcf; stroke-width: 4; }
.beige { fill: #eff2e4; }
.green { fill: #c5e8cb; }
.green-path { fill: none; stroke: #8fd0a1; stroke-width: 5; }
.water { fill: #a5dbff; }
.hall { fill: #f3edeb; stroke: #ece3e3; stroke-width: 3; }
.houses { fill: none; stroke: #f0f0f0; stroke-width: 74; stroke-dasharray: 46 3; }

/* Map: roads */
.roads {
  fill: none;
  stroke: #fff;
  stroke-linejoin: round;
  filter: drop-shadow(0 0 3px #d4d8de);
}
.w110 { stroke-width: 110px; }
.w70 { stroke-width: 70px; }
.w60 { stroke-width: 60px; }
.w50 { stroke-width: 48px; }
.w36 { stroke-width: 36px; }
.w26 { stroke-width: 26px; }
.w14 { stroke-width: 14px; }
.w12 { stroke-width: 10px; }
.tramline, .lane { fill: none; stroke: #dcdfe1; stroke-width: 4; }
.lane { stroke: #e8e9eb; stroke-width: 12; }
.arrows { fill: #c6c9df; }

/* Map: labels */
.labels {
  font: 18px Roboto, sans-serif;
  paint-order: stroke;
  stroke: rgba(255, 255, 255, .7);
  stroke-width: 2px;
}
.street { fill: #7f8184; font-size: 16px; }
.street-big { font-size: 18px; }
.food { fill: #e18358; }
.culture { fill: #3497a0; }
.transit { fill: #3f9fd6; }
.park { fill: #3d8f42; }
.shop { fill: #4a83c0; }
.place { fill: #647f8c; }
.big { fill: #4d7d8e; font-size: 23px; font-weight: 500; }
.building { fill: #111; font-size: 13px; }

/* Map: pins and route */
.pins { fill: #fff; }
.pin-food { fill: #f29b67; }
.pin-place { fill: #7a9fb2; }
.pin-culture { fill: #50b7c8; }
.pin-park { fill: #53b55d; }
.pin-shop { fill: #4398f0; }
.tram-box { fill: #4fbdfb; }
.route {
  fill: none;
  stroke: #ee722e;
  stroke-width: 57;
  stroke-linecap: round;
  stroke-linejoin: round;
}
```
